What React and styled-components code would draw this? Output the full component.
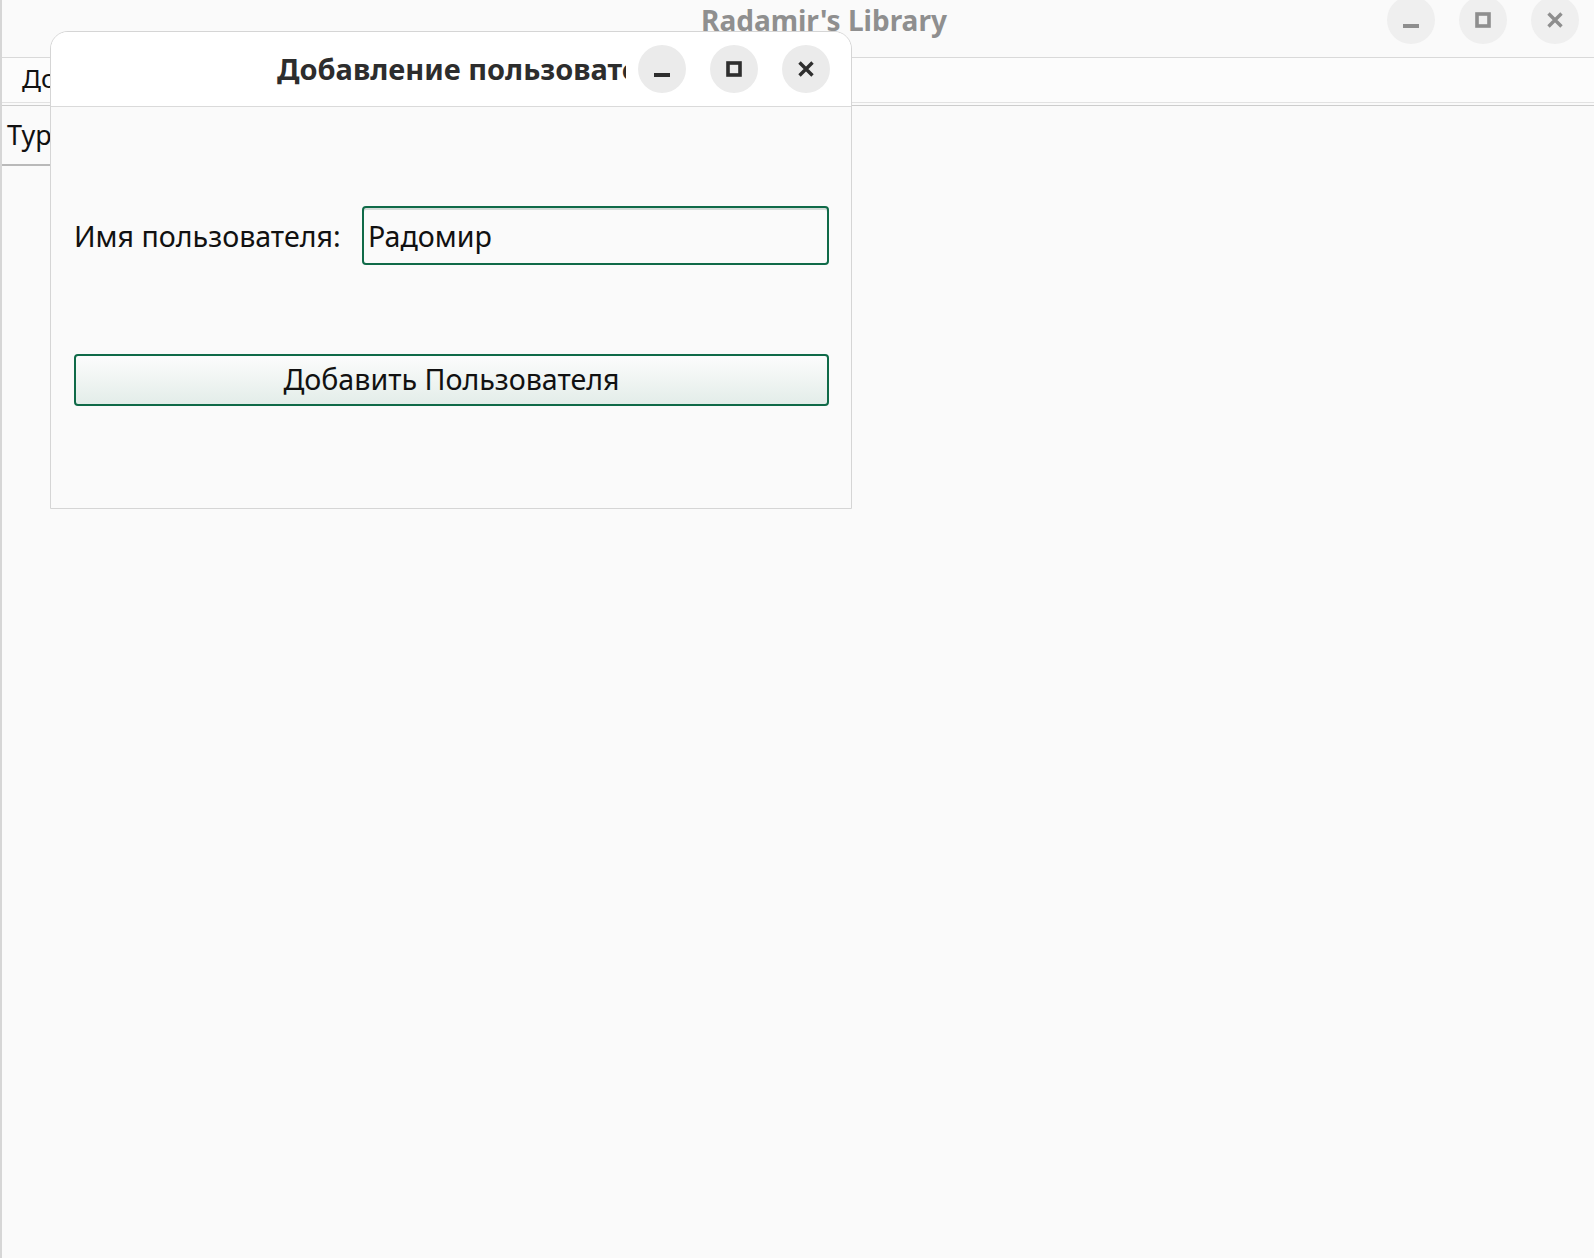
import React from 'react';
import styled, { createGlobalStyle } from 'styled-components';

const GlobalStyle = createGlobalStyle`
    html, body {
        margin: 0;
        padding: 0;
        background: #fafafa;
    }

    body {
        font-family: "Noto Sans", "DejaVu Sans", sans-serif;
        color: #111;
    }
`;

const Screen = styled.div`
    position: relative;
    width: 1594px;
    height: 1258px;
    overflow: hidden;
    background: #fafafa;
`;

const MainWindow = styled.div`
    display: flex;
    flex-direction: column;
    height: 100%;
    border-left: 2px solid #d6d6d6;
`;

const TitleBar = styled.div`
    display: grid;
    grid-template-columns: 1fr auto 1fr;
    grid-template-rows: 40px;
    align-items: center;
    padding: 0 15px 17px 0;
    border-bottom: 1px solid #d9d9d9;
    background: #fafafa;
`;

const MainTitle = styled.div`
    grid-column: 2;
    margin-left: 67px;
    font-size: 28px;
    font-weight: 700;
    line-height: 40px;
    color: #8f8f8f;
    white-space: nowrap;
`;

const Controls = styled.div`
    display: flex;
    gap: 24px;
    justify-self: end;
    align-self: center;
`;

const WinButton = styled.div`
    display: flex;
    align-items: center;
    justify-content: center;
    width: 48px;
    height: 48px;
    flex: none;
    border-radius: 50%;
    background: ${p => p.$bg};
    color: ${p => p.$fg};
`;

const MenuBar = styled.div`
    display: flex;
    align-items: center;
    height: 45px;
    padding: 0 0 4px 20px;
    box-sizing: border-box;
    border-bottom: 1px solid #e2e2e2;
    background: #fcfcfc;
`;

const MenuItem = styled.div`
    font-size: 26px;
    line-height: 30px;
`;

const TabStrip = styled.div`
    display: flex;
    margin-top: 2px;
    border-top: 1px solid #cdcdcd;
    background: #fafafa;
`;

const Tab = styled.div`
    display: flex;
    align-items: center;
    height: 60px;
    padding: 0 16px 2px 5px;
    box-sizing: border-box;
    border-bottom: 2px solid #b9b9b9;
    font-size: 27px;
`;

const Dialog = styled.div`
    position: absolute;
    left: 50px;
    top: 31px;
    width: 802px;
    height: 478px;
    box-sizing: border-box;
    display: flex;
    flex-direction: column;
    border: 1px solid #d5d5d5;
    border-radius: 18px 18px 0 0;
    background: #fafafa;
    overflow: hidden;
`;

const DialogHeader = styled.div`
    display: flex;
    align-items: center;
    height: 74px;
    padding-right: 21px;
    border-bottom: 1px solid #dadada;
    background: #ffffff;
`;

const DialogTitle = styled.div`
    flex: 1;
    min-width: 0;
    margin-right: 12px;
    padding-left: 226px;
    overflow: hidden;
    white-space: nowrap;
    font-size: 29px;
    font-weight: 700;
    line-height: 40px;
    color: #2d2d2d;
`;

const DialogBody = styled.div`
    display: flex;
    flex-direction: column;
    padding: 99px 22px 0 23px;
`;

const FieldRow = styled.div`
    display: grid;
    grid-template-columns: 288px 1fr;
    align-items: center;
`;

const Label = styled.label`
    font-size: 28.6px;
    line-height: 36px;
    color: #111;
    white-space: nowrap;
`;

const TextInput = styled.input`
    height: 59px;
    box-sizing: border-box;
    padding: 0 0 0 4px;
    border: 2px solid #0f6a48;
    border-radius: 4px;
    background: #fafafa;
    box-shadow: inset 0 2px 0 #d4dbd8;
    font-family: "Noto Sans", "DejaVu Sans", sans-serif;
    font-size: 28.6px;
    color: #111;
    outline: none;
`;

const PrimaryButton = styled.button`
    height: 52px;
    margin-top: 89px;
    box-sizing: border-box;
    border: 2px solid #0f6a48;
    border-radius: 4px;
    background: linear-gradient(#fcfcfc, #e3ede9);
    font-family: "Noto Sans", "DejaVu Sans", sans-serif;
    font-size: 28.6px;
    line-height: 30px;
    color: #111;
    padding: 0 0 2px;
`;

const MinimizeIcon = () => (
    <svg width="16" height="16" viewBox="0 0 16 16">
        <rect x="0" y="12" width="16" height="4" fill="currentColor" />
    </svg>
);

const MaximizeIcon = () => (
    <svg width="16" height="16" viewBox="0 0 16 16">
        <rect x="2" y="2" width="12" height="12" fill="none" stroke="currentColor" strokeWidth="3.6" />
    </svg>
);

const CloseIcon = () => (
    <svg width="16" height="16" viewBox="0 0 16 16">
        <path d="M1.5 1.5 L14.5 14.5 M14.5 1.5 L1.5 14.5" stroke="currentColor" strokeWidth="3.4" fill="none" />
    </svg>
);

const WindowControls = ({ bg, fg }) => (
    <Controls>
        <WinButton $bg={bg} $fg={fg}><MinimizeIcon /></WinButton>
        <WinButton $bg={bg} $fg={fg}><MaximizeIcon /></WinButton>
        <WinButton $bg={bg} $fg={fg}><CloseIcon /></WinButton>
    </Controls>
);

export default function App() {
    return (
        <Screen>
            <GlobalStyle />
            <MainWindow>
                <TitleBar>
                    <MainTitle>Radamir's Library</MainTitle>
                    <WindowControls bg="#efefef" fg="#8e8e8e" />
                </TitleBar>
                <MenuBar>
                    <MenuItem>Добавить</MenuItem>
                </MenuBar>
                <TabStrip>
                    <Tab>Турниры</Tab>
                </TabStrip>
            </MainWindow>

            <Dialog>
                <DialogHeader>
                    <DialogTitle>Добавление пользователя</DialogTitle>
                    <WindowControls bg="#ebebeb" fg="#2e2e2e" />
                </DialogHeader>
                <DialogBody>
                    <FieldRow>
                        <Label>Имя пользователя:</Label>
                        <TextInput defaultValue="Радомир" />
                    </FieldRow>
                    <PrimaryButton>Добавить Пользователя</PrimaryButton>
                </DialogBody>
            </Dialog>
        </Screen>
    );
}
